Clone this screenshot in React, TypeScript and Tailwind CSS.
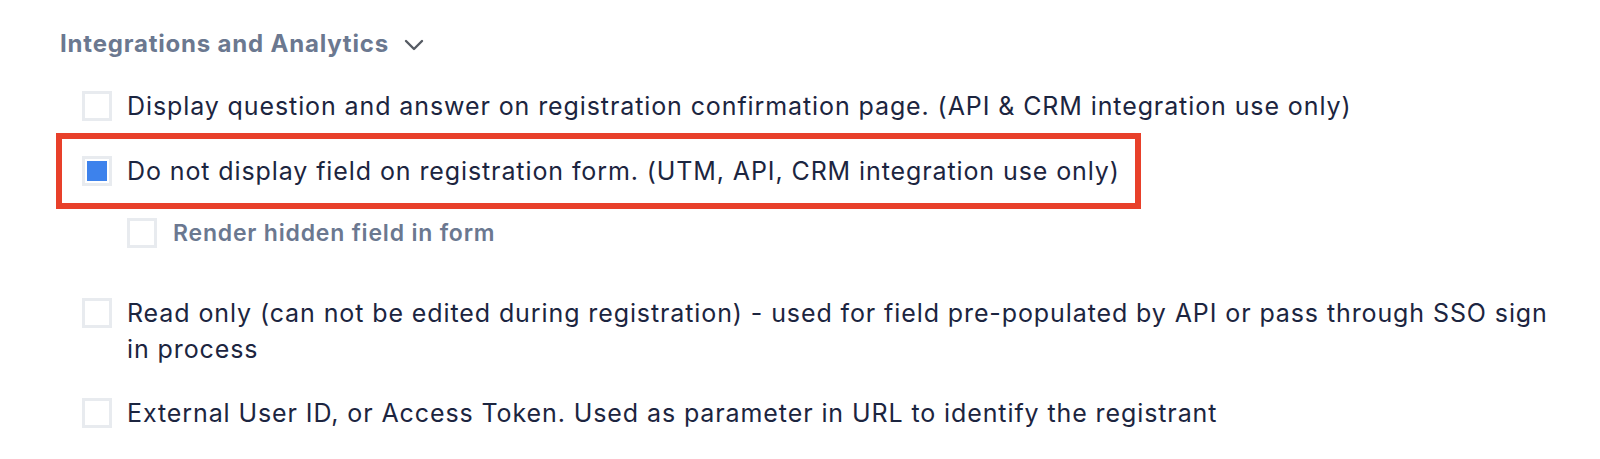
import React from "react";

function Box({ checked = false }: { checked?: boolean }) {
  return (
    <div className="w-[30px] h-[30px] shrink-0 border-[3px] border-[#e8ebef] bg-white flex items-center justify-center">
      {checked && <div className="w-[20px] h-[20px] bg-[#3d82ec]" />}
    </div>
  );
}

export default function App() {
  return (
    <div
      className="w-[1600px] h-[459px] bg-white overflow-hidden pl-[60px] pt-[26px]"
      style={{ fontFamily: "Inter, 'Noto Sans', sans-serif" }}
    >
      <div className="flex items-center gap-[15px] h-[36px]">
        <span className="text-[24px] font-bold tracking-[0.8px] text-[#6b7890] leading-[36px]">
          Integrations and Analytics
        </span>
        <svg width="20" height="12" viewBox="0 0 20 12" fill="none" className="mt-[2px]">
          <path d="M2 2 L10 10 L18 2" stroke="#555b63" strokeWidth="2.4" strokeLinecap="round" strokeLinejoin="round" />
        </svg>
      </div>

      <div className="flex flex-col mt-[26px] text-[#1c2540] text-[25px] tracking-[0.9px] leading-[36px]">
        <div className="flex items-start gap-[15px] pl-[22px]">
          <div className="pt-[3px]"><Box /></div>
          <span>Display question and answer on registration confirmation page. (API &amp; CRM integration use only)</span>
        </div>

        <div className="mt-[9px] ml-[-4px] self-start border-[6px] border-[#e8402a] pl-[20px] pr-[15px] py-[14px] flex items-start gap-[15px]">
          <div className="pt-[3px]"><Box checked /></div>
          <span>Do not display field on registration form. (UTM, API, CRM integration use only)</span>
        </div>

        <div className="flex items-start gap-[16px] pl-[67px] mt-[6px]">
          <div className="pt-[3px]"><Box /></div>
          <span className="text-[23px] font-semibold tracking-[0.8px] text-[#6b7890]">Render hidden field in form</span>
        </div>

        <div className="flex items-start gap-[15px] pl-[22px] mt-[44px] pr-[44px]">
          <div className="pt-[3px]"><Box /></div>
          <span>Read only (can not be edited during registration) - used for field pre-populated by API or pass through SSO sign in process</span>
        </div>

        <div className="flex items-start gap-[15px] pl-[22px] mt-[28px]">
          <div className="pt-[3px]"><Box /></div>
          <span>External User ID, or Access Token. Used as parameter in URL to identify the registrant</span>
        </div>
      </div>
    </div>
  );
}
